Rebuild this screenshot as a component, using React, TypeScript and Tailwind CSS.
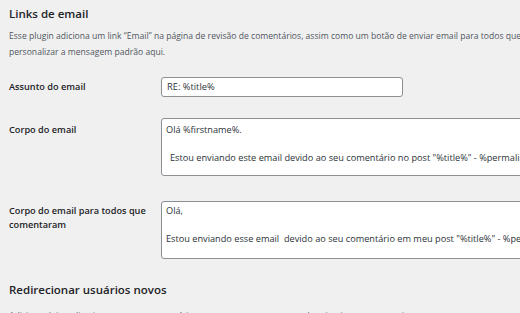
import React from "react";

export default function App() {
  const font = { fontFamily: '"Open Sans", "Noto Sans", sans-serif' };
  return (
    <div
      className="w-[520px] h-[313px] overflow-hidden bg-[#f0f0f1] text-[#3c434a] pl-[9px]"
      style={font}
    >
      <h2 className="pt-[4px] text-[11.5px] leading-[20px] font-semibold text-[#1d2327]">
        Links de email
      </h2>
      <p className="mt-[4px] text-[8.6px] leading-[16px] whitespace-nowrap text-[#50575e]">
        Esse plugin adiciona um link “Email” na página de revisão de comentários, assim como um botão de enviar email para todos que
        <br />
        personalizar a mensagem padrão aqui.
      </p>

      <div className="mt-[17px] flex items-center">
        <div className="w-[152px] shrink-0 text-[9.2px] font-semibold text-[#1d2327]">Assunto do email</div>
        <div className="w-[242px] h-[20px] shrink-0 rounded-[3px] border border-[#8c8f94] bg-white pl-[5px] text-[9.3px] leading-[18px] text-[#2c3338]">
          RE: %title%
        </div>
      </div>

      <div className="mt-[21px] flex items-start">
        <div className="w-[152px] shrink-0 pt-[5px] text-[9.2px] leading-[14px] font-semibold text-[#1d2327]">
          Corpo do email
        </div>
        <div className="w-[420px] h-[58px] shrink-0 rounded-[3px] border border-[#8c8f94] bg-white pl-[4px] pt-[4px] text-[9.2px] leading-[14px] text-[#2c3338] whitespace-pre">
          <div>Olá %firstname%.</div>
          <div>&nbsp;</div>
          <div className="pl-[4px]">Estou enviando este email devido ao seu comentário no post "%title%" - %permalink%</div>
        </div>
      </div>

      <div className="mt-[25px] flex items-start">
        <div className="w-[152px] shrink-0 pt-[3px] text-[9.2px] leading-[14px] font-semibold text-[#1d2327]">
          Corpo do email para todos que
          <br />
          comentaram
        </div>
        <div className="w-[420px] h-[58px] shrink-0 rounded-[3px] border border-[#8c8f94] bg-white pl-[4px] pt-[2px] text-[9.2px] leading-[14px] text-[#2c3338] whitespace-pre">
          <div>Olá,</div>
          <div>&nbsp;</div>
          <div>Estou enviando esse email  devido ao seu comentário em meu post "%title%" - %permalink%</div>
        </div>
      </div>

      <h2 className="mt-[21px] text-[11.5px] leading-[20px] font-semibold text-[#1d2327]">
        Redirecionar usuários novos
      </h2>
      <p className="mt-[8px] text-[8.6px] leading-[16px] whitespace-nowrap text-[#50575e]">
        Adicione dois redirecionamentos para usuários novos que comentaram pela primeira vez no seu site.
      </p>
    </div>
  );
}
